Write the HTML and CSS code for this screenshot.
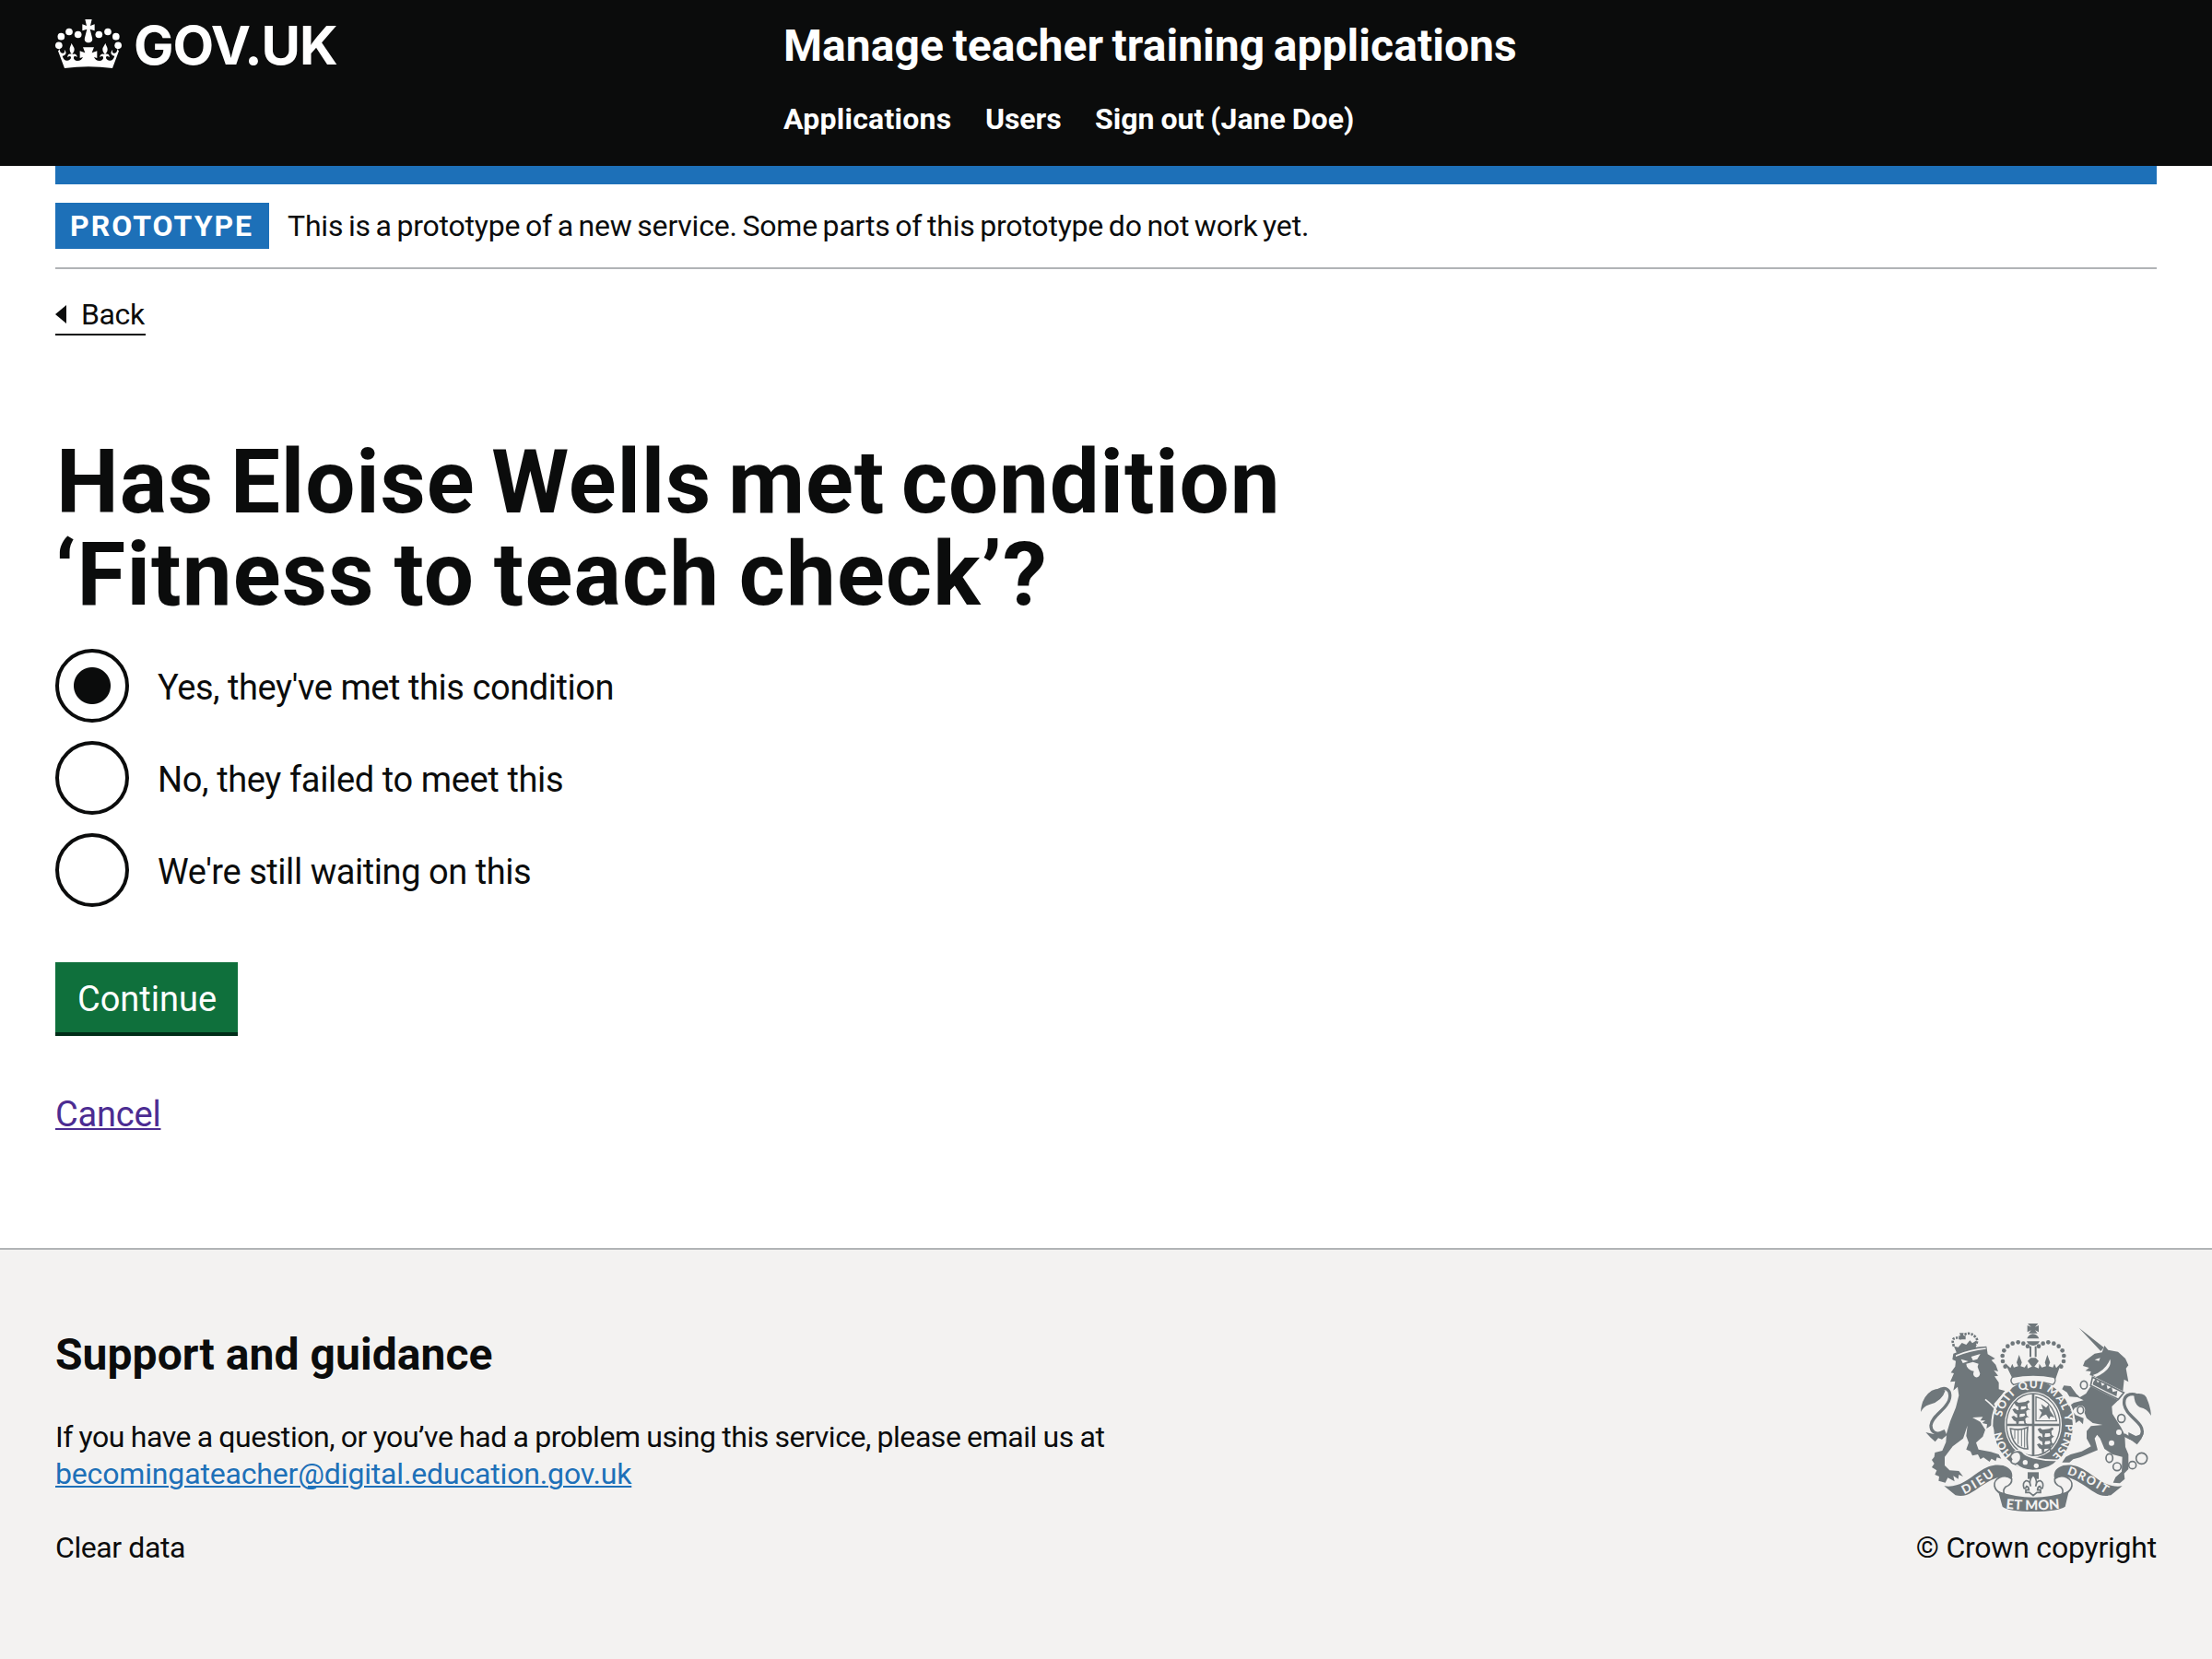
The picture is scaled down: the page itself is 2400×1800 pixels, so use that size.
FILE: index.html
```html
<!DOCTYPE html>
<html lang="en">
<head>
<meta charset="utf-8">
<title>Manage teacher training applications</title>
<link rel="stylesheet" href="styles.css">
</head>
<body>
<header class="header">
  <a class="logo" href="#">
    <svg class="logo-crown" viewBox="57 60 222 165" aria-hidden="true">
      <g fill="#fff">
        <circle cx="71.500" cy="148" r="11.500"/><circle cx="79" cy="119" r="11.500"/><circle cx="105" cy="103.500" r="11.500"/><circle cx="134" cy="112.500" r="11.500"/>
        <circle cx="202" cy="112.500" r="11.500"/><circle cx="231" cy="103.500" r="11.500"/><circle cx="257.500" cy="119" r="11.500"/><circle cx="264.500" cy="148" r="11.500"/>
        <path d="M157 63h22l-5 21 14-5v21l-15-5 7 28c3 10-4 16-12 16s-15-6-12-16l7-28-15 5V79l14 5z"/>
        <path d="M90 222L69 166c3-3 4-5 5-8 0 12 7 16 12 15 5-1 5-7 3-12 10 10 6 19-6 21 4 13 11 16 17 15 7-1 12-6 11-11-1-4-7-4-11 1-1-8 5-14 13-10-2-5-6-8-6-16 0-9 3-10 6-21 4 11 9 13 9 21 0 8-5 11-7 16 8-4 16 0 16 9-5-4-10-4-11 1-1 6 4 11 12 11 9 0 14-4 18-12l-10 3v-23l17 6-7-18h36l-7 18 17-6v23l-10-3c4 8 9 12 18 12 8 0 13-5 12-11-1-5-6-5-11-1 0-9 8-13 16-9-2-5-7-8-7-16 0-8 5-10 9-21 3 11 7 12 7 21 0 8-5 11-7 16 8-4 14 2 13 10-4-5-10-5-11-1-1 5 4 10 11 11 6 1 13-2 17-15-12-2-16-11-6-21-2 5-2 11 3 12 5 1 12-3 12-15 1 3 3 6 5 8l-21 56q-78-10-156 0z"/>
      </g>
    </svg>
    <span class="logo-text">GOV.UK</span>
  </a>
  <div class="header-content">
    <a class="service-name" href="#">Manage teacher training applications</a>
    <nav class="nav">
      <a class="nav-apps" href="#">Applications</a>
      <a class="nav-users" href="#">Users</a>
      <a class="nav-out" href="#">Sign out (Jane Doe)</a>
    </nav>
  </div>
</header>
<div class="container">
  <div class="bar"></div>
  <div class="phase">
    <strong class="tag">PROTOTYPE</strong>
    <span class="phase-text">This is a prototype of a new service. Some parts of this prototype do not work yet.</span>
  </div>
  <a class="back" href="#"><svg class="back-arrow" viewBox="0 0 12 20" aria-hidden="true"><path d="M12 0v20L0 10z" fill="#0b0c0c"/></svg>Back</a>
  <main class="main">
    <h1 class="heading"><span class="heading-first">Has Eloise Wells met condition</span> <span class="heading-second">‘Fitness to teach check’?</span></h1>
    <div class="radios">
      <label class="radio"><span class="dot dot-on"></span><span class="label">Yes, they've met this condition</span></label>
      <label class="radio"><span class="dot"></span><span class="label label-no">No, they failed to meet this</span></label>
      <label class="radio"><span class="dot"></span><span class="label">We're still waiting on this</span></label>
    </div>
    <button class="button" type="button">Continue</button>
    <a class="cancel" href="#">Cancel</a>
  </main>
</div>
<footer class="footer">
  <div class="support">
    <h2 class="support-title">Support and guidance</h2>
    <p class="support-text">If you have a question, or you’ve had a problem using this service, please email us at<br><a class="email" href="#">becomingateacher@digital.education.gov.uk</a></p>
    <p class="clear">Clear data</p>
  </div>
  <div class="copyright">
    <svg class="crest" viewBox="90 75 774 618" aria-hidden="true">
      <defs>
        <path id="garter" d="M468 532A105 122 0 0 1 468 288A105 122 0 0 1 468 532"/>
        <path id="dieu" d="M244 634Q290 612 348 570"/>
        <path id="droit" d="M578 568Q630 585 706 634"/>
        <path id="mon" d="M376 680Q468 690 560 680"/>
        <g id="pearls">
          <circle cx="377" cy="218" r="7"/><circle cx="369" cy="201" r="7"/><circle cx="368" cy="183" r="7"/><circle cx="373" cy="166" r="7"/><circle cx="385" cy="152" r="7"/><circle cx="401" cy="143" r="7"/><circle cx="419" cy="139" r="7"/><circle cx="436" cy="143" r="7"/><circle cx="450" cy="152" r="7"/>
        </g>
        <g id="beast"><path d="M0 4l8-4 8 6 22-3 10-5 5 5-8 7 2 14 8 5-12-1-3-11-15 1-2 10 7 5-13-1-2-13-7-3z"/></g>
      </defs>
      <g fill="#6f777b">
        <!-- lion -->
        <path d="M216 200L205 195L208 176Q260 154 316 152L320 178L344 192L332 197L346 212L354 234L340 230L354 248L342 250L356 270L356 292L378 298L352 326L340 340L362 372L378 402L378 428L368 426L364 438L350 420L346 432L334 408L316 420L318 406L302 402L312 394L296 394L304 382L270 384L296 398L312 424L304 446L282 466L290 488L330 496L356 504L364 518L350 514L346 526L332 518L326 528L306 514L296 520L288 504L270 508L264 494L250 488L258 466L250 444L254 410L240 452L206 478L180 512L180 540L196 556L226 558L240 576L226 570L224 584L208 574L212 592L190 580L182 596L160 590L162 576L148 570L154 556L138 546L146 534L138 522L146 512L148 498L172 492L184 464L186 436L198 396L216 352L226 312L222 284L208 296L214 266L198 268L210 240L200 238L214 218Z"/>
        <path d="M102 366q2-48 36-70 26-12 44 0-11 35-50 45-20 5-30 25z"/>
        <path d="M158 296c22-14 44-5 38 26-5 34-58 54-61 88q0 30 39 26" fill="none" stroke="#6f777b" stroke-width="10"/>
        <path d="M118 432l26 6 35-15 8 18-16 14-12-4-10 12-15-14z"/>
        <path d="M219 174l-9-22 14 3 12-14 14 6 12-14 8 9 14-9-3 26q-32 2-62 15z"/>
        <g fill="none" stroke="#6f777b" stroke-width="8" stroke-dasharray="7 4"><path d="M210 152q-14-34 22-26 22-28 46-6 14 12 2 28"/></g>
        <path d="M228 109h14l-3 9h9v12h-22v-12h5z"/>
        <g fill="#f3f2f1"><path d="M216 181q45-20 98-24v4q-52 5-98 25zM233 194l24 7-18 6zM266 186l30-9-10 17-14 4zM252 218l-2-9 22-6 18 6-3 10 8 22q-2 14-14 12-12-6-6-20-14-1-23-15z"/></g>
        <path d="M312 325q44 35 66 82" fill="none" stroke="#f3f2f1" stroke-width="5"/>
        <!-- unicorn -->
        <path d="M617 92L698 156L688 168Z"/>
        <path d="M630 216L636 200L668 176L692 172L700 150L712 164L744 170L768 192L778 214L770 224L778 268L764 260L760 298L664 250L652 246L656 234L638 232L650 222Z"/>
        <path d="M718 194Q728 226 672 252L662 246Q704 232 718 194Z" fill="#f3f2f1"/>
        <path d="M655 282L745 328L724 348L726 372L754 416L766 440L768 480L778 504L778 552L764 566L766 584L750 598L728 596L736 578L756 560L758 512L726 504L700 486L686 452L676 440L668 452L678 490L620 514L598 520L586 530L562 530L574 512L590 504L626 494L656 478L642 452L642 428L656 412L694 408L662 402L642 386L628 352L604 352L596 364L606 376L632 386L630 406L618 394L606 402L604 390L590 392L594 380L580 374L590 362L580 350L600 336L632 328L612 318L586 316L578 302L562 292L568 280L590 282L606 304L620 318L640 306Z"/>
        <path d="M661 253L763 303L745 325L655 280Z" fill="#f3f2f1" stroke="#6f777b" stroke-width="5"/>
        <path d="M664 268l8-11 6 14 9-7 5 17 14-8 4 19 13-8 4 17 15-4-3 18-77-38z"/>
        <path d="M764 440c28 20 50 20 58-4 10-36-55-56-58-98-2-34 34-38 52-18" fill="none" stroke="#6f777b" stroke-width="10"/>
        <path d="M796 308q38-8 44 20 10 22 12 50-14-24-36-27-20-10-20-43zM778 432l24 12 26-8-8 18-14 18-16-12-12-8z"/>
        <g fill="none" stroke="#6f777b" stroke-width="5"><ellipse cx="633" cy="278" rx="11" ry="13"/><ellipse cx="755" cy="387" rx="12" ry="13"/><ellipse cx="716" cy="516" rx="11" ry="14"/><circle cx="741" cy="544" r="13"/><circle cx="791" cy="539" r="12"/><circle cx="821" cy="517" r="18"/></g>
        <g fill="#f3f2f1"><ellipse cx="615" cy="301" rx="8" ry="9"/><circle cx="747" cy="432" r="9"/><circle cx="723" cy="467" r="9"/><circle cx="622" cy="360" r="15"/><path d="M668 196l18-6-4 10z"/></g>
        <ellipse cx="622" cy="360" rx="10" ry="12" fill="none" stroke="#6f777b" stroke-width="5"/>
        <!-- crown -->
        <path d="M450 78h34l-10 11 12-5v22l-12-6 8 10h-29l8-10-12 6V84l12 5zM448 127q5-14 19-15 15 1 20 15zM447 136h42q-6 13-21 14-16-1-21-14z"/>
        <path d="M456 152h6v35h-6zM473 152h6v35h-6zM444 152h8l-2 7zM483 152h8l-5 7z"/>
        <use href="#pearls"/><use href="#pearls" transform="matrix(-1 0 0 1 936 0)"/>
        <path d="M376 206l18 17 6-14 5 12 14-4-5-12 8-25 9 25-4 12 13 4 8-12 2 15 14-6-14-18 10-10h16l10 10-14 18 14 6 2-15 8 12 14-4-4-12 8-25 9 25-5 12 14 4 5-12 6 14 16-17-18 52q-70-20-140 0z"/>
        <!-- garter and shield -->
        <ellipse cx="468" cy="410" rx="134" ry="149" fill="none" stroke="#f3f2f1" stroke-width="6"/>
        <ellipse cx="468" cy="410" rx="129" ry="145"/>
        <path d="M400 253q68-14 136 0 10 12-4 24-64-20-128 0-14-10-4-24z" fill="#f3f2f1" stroke="#6f777b" stroke-width="4"/>
        <ellipse cx="468" cy="407" rx="93" ry="107" fill="#f3f2f1"/>
        <ellipse cx="468" cy="407" rx="87" ry="101" fill="none" stroke="#6f777b" stroke-width="4"/>
        <path d="M382 404h172v8H382zM464 307h8v200h-8z"/>
        <use href="#beast" x="404" y="330"/><use href="#beast" x="400" y="354"/><use href="#beast" x="397" y="378"/>
        <use href="#beast" x="482" y="418"/><use href="#beast" x="482" y="443"/><use href="#beast" x="480" y="468"/>
        <path d="M477 317q55 14 67 78h-67z" fill="none" stroke="#6f777b" stroke-width="4"/>
        <path d="M486 390l10-22-10-12 14 2-6-18 16 12 8-10 5 20 15 22-14-4-4 10-10-16-10 4z"/>
        <path d="M394 420q30 8 56-4-4 40 0 70-50 0-56-66z" fill="none" stroke="#6f777b" stroke-width="5"/><path d="M408 424v30M419 424v46M430 422v56M440 420v62" stroke="#6f777b" stroke-width="3"/>
        <g fill="#f3f2f1" font-family="Lato, sans-serif" font-weight="900" font-size="36">
          <text><textPath href="#garter" startOffset="74">HON</textPath></text>
          <text><textPath href="#garter" startOffset="206" textLength="316">SOIT QUI MAL Y</textPath></text>
          <text><textPath href="#garter" startOffset="530" textLength="116">PENSE</textPath></text>
        </g>
        <path d="M403 500q12-16 30-5 8 12 36 20 40 10 80 8-24 30-82 34-38-4-54-20-18-10-10-37z" stroke="#f3f2f1" stroke-width="5"/>
        <path d="M404 498q22-8 24 12 2 18-18 26-20-4-12-16-10-10 6-22z" fill="#f3f2f1" stroke="#6f777b" stroke-width="5"/>
        <g fill="#f3f2f1"><circle cx="442" cy="530" r="8"/><circle cx="478" cy="541" r="8"/></g>
        <!-- ribbons -->
        <path d="M178 607c47 6 72-17 112-45 30-22 55-27 80-22 28 8 34 28 28 45-30-16-58-4-88 15-40 25-55 45-95 37z"/>
        <path d="M758 607c-47 6-72-17-112-45-30-22-55-27-80-22-28 8-34 28-28 45 30-16 58-4 88 15 40 25 55 45 95 37z"/>
        <g fill="#f3f2f1" stroke="#6f777b" stroke-width="5"><path d="M398 584c-26-22-60 2-56 22 2 12 10 20 20 24l14 6q-10-14 2-26 22-8 20-26zM538 584c26-22 60 2 56 22-2 12-10 20-20 24l-14 6q10-14-2-26-22-8-20-26z"/></g>
        <path d="M354 624q114 40 230 0l-12 50q-24 16-104 16-82 0-100-16z"/>
        <path d="M450 562h36v22h-36z"/>
        <path d="M468 570q16 20 8 38 2-20 16-18 12 6 6 24-6 2-8-6-8 2-8 12h10v8h-12l-12 10-12-10h-12v-8h10q0-10-8-12-2 8-8 6-6-18 6-24 14-2 16 18-8-18 8-38z" fill="#f3f2f1" stroke="#6f777b" stroke-width="5"/>
        <g fill="#f3f2f1" font-family="Lato, sans-serif" font-weight="900" font-size="44">
          <text font-size="40"><textPath href="#dieu" textLength="116">DIEU</textPath></text>
          <text><textPath href="#mon" startOffset="3" textLength="176">ET MON</textPath></text>
          <text font-size="38"><textPath href="#droit" textLength="142">DROIT</textPath></text>
        </g>
      </g>
    </svg>
    <span class="copyright-text">© Crown copyright</span>
  </div>
</footer>
</body>
</html>
```
FILE: styles.css
```css
* { box-sizing: border-box; }
body {
  margin: 0;
  min-height: 1800px;
  display: flex;
  flex-direction: column;
  background: #fff;
  color: #0b0c0c;
  font: 400 32px/40px Roboto, sans-serif;
  white-space: nowrap;
}
a { color: inherit; text-decoration: none; }
h1, h2, p { margin: 0; }

.header {
  display: grid;
  grid-template-columns: 790px 1fr;
  height: 180px;
  padding: 20px 60px 0;
  background: #0b0c0c;
  color: #fff;
  font-weight: 700;
}
.logo { display: flex; gap: 12px; align-items: flex-start; }
.logo-crown { width: 74px; height: 55px; margin-left: -1px; }
.logo-text { font-family: Inter, sans-serif; font-size: 58px; line-height: 58px; letter-spacing: -1.1px; }
.header-content { display: flex; flex-direction: column; align-items: flex-start; gap: 29px; }
.service-name { font-size: 48px; line-height: 60px; letter-spacing: 0.05px; word-spacing: -2.5px; }
.nav { display: flex; }
.nav-apps { width: 219px; letter-spacing: 0.25px; }
.nav-users { width: 119px; letter-spacing: -0.1px; }
.nav-out { letter-spacing: 0.02px; word-spacing: -1px; }

.container { padding: 0 60px; }
.bar { height: 20px; background: #1d70b8; }
.phase {
  display: flex;
  align-items: center;
  gap: 20px;
  padding: 20px 0;
  border-bottom: 2px solid #b1b4b6;
}
.tag {
  width: 232px;
  padding: 5px 0 5px 16px;
  background: #1d70b8;
  color: #fff;
  letter-spacing: 2px;
}
.phase-text { letter-spacing: -0.2px; word-spacing: -2.05px; }
.back {
  display: inline-flex;
  align-items: center;
  gap: 16px;
  width: 98px;
  height: 43px;
  margin-top: 29px;
  padding-bottom: 1px;
  border-bottom: 2px solid #0b0c0c;
  letter-spacing: -0.4px;
  vertical-align: top;
}
.back-arrow { width: 12px; height: 20px; }

.main {
  display: flex;
  flex-direction: column;
  align-items: flex-start;
  padding-top: 109px;
  font-size: 38px;
  line-height: 50px;
}
.heading { font-size: 96px; line-height: 100px; }
.heading-first, .heading-second { display: block; }
.heading-first { padding-left: 1px; letter-spacing: 0.9px; word-spacing: -7px; }
.heading-second { letter-spacing: 1.2px; word-spacing: -4.5px; }
.radios { display: flex; flex-direction: column; gap: 20px; margin-top: 31px; }
.radio { display: flex; align-items: center; gap: 31px; height: 80px; }
.dot { width: 80px; height: 80px; border: 4px solid #0b0c0c; border-radius: 50%; }
.dot-on { background: radial-gradient(circle, #0b0c0c 19.500px, transparent 20.500px); }
.label { padding-top: 3px; letter-spacing: -0.44px; }
.label-no { letter-spacing: -0.37px; }
.button {
  width: 198px;
  height: 80px;
  margin-top: 60px;
  padding: 3px 0 0 1px;
  border: 0;
  border-bottom: 4px solid #002d18;
  background: #0f703c;
  color: #fff;
  font: 400 38px/50px Roboto, sans-serif;
}
.cancel {
  margin-top: 60px;
  color: #4c2c92;
  letter-spacing: -0.2px;
  text-decoration: underline 2px;
  text-underline-offset: 2px;
}

.footer {
  flex: 1;
  display: flex;
  justify-content: space-between;
  align-items: flex-start;
  margin-top: 120px;
  padding: 79px 60px 0;
  border-top: 2px solid #b1b4b6;
  background: #f3f2f1;
}
.support { padding-top: 5px; }
.support-title { font-size: 48px; line-height: 60px; letter-spacing: 0.05px; }
.support-text { margin-top: 39px; letter-spacing: -0.45px; word-spacing: -0.8px; }
.email {
  color: #1d70b8;
  letter-spacing: -0.16px;
  text-decoration: underline 2px;
  text-underline-offset: 2px;
}
.clear { margin-top: 40px; letter-spacing: -0.41px; }
.copyright { display: flex; flex-direction: column; align-items: flex-end; gap: 18px; }
.crest { width: 258px; height: 206px; margin-right: 2px; }
.copyright-text { letter-spacing: -0.22px; }
```
